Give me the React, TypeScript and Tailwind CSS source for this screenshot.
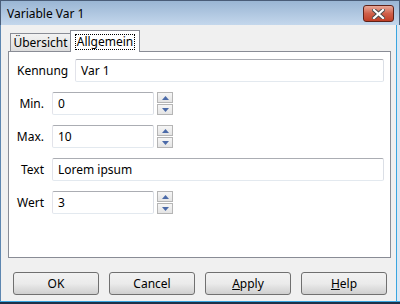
import React from "react";

const font = { fontFamily: '"Segoe UI", "Noto Sans", "Open Sans", sans-serif' };

function Spinner() {
  const btn =
    "w-[16px] h-[11px] border border-[#b5b5b5] bg-gradient-to-b from-[#f6f6f6] to-[#e4e4e4] flex items-center justify-center";
  return (
    <div className="flex flex-col gap-[1px] ml-[3px]">
      <div className={btn}>
        <svg width="7" height="4" viewBox="0 0 7 4">
          <path d="M3.5 0 L7 4 L0 4 Z" fill="#4b6aa8" />
        </svg>
      </div>
      <div className={btn}>
        <svg width="7" height="4" viewBox="0 0 7 4">
          <path d="M0 0 L7 0 L3.5 4 Z" fill="#4b6aa8" />
        </svg>
      </div>
    </div>
  );
}

function Input({ w, value }: { w: string; value: string }) {
  return (
    <div
      className={`${w} h-[23px] bg-white border border-t-[#abadb3] border-l-[#e2e3ea] border-r-[#dbdfe6] border-b-[#e3e9ef] rounded-[2px] flex items-center pl-[5px] text-[12px] text-black`}
    >
      {value}
    </div>
  );
}

function Btn({ children }: { children: React.ReactNode }) {
  return (
    <div className="w-[86px] h-[23px] rounded-[3px] border border-[#707070] bg-gradient-to-b from-[#f2f2f2] via-[#ebebeb] to-[#cfcfcf] flex items-center justify-center text-[12px] text-black">
      {children}
    </div>
  );
}

export default function App() {
  return (
    <div className="w-[400px] h-[304px] overflow-hidden bg-[#f0f0f0] flex flex-col" style={font}>
      {/* Title bar */}
      <div className="h-[25px] shrink-0 border-t border-l border-r border-[#4a5d78] bg-gradient-to-b from-[#9ab6d4] to-[#c4d7ec] flex items-center pl-[6px] pr-[5px]">
        <span className="text-[12px] text-black mt-[2px]">Variable Var 1</span>
        <div className="ml-auto mt-[1px] w-[31px] h-[17px] rounded-[3px] border border-[#5e2219] bg-gradient-to-b from-[#e8a898] via-[#d0604a] to-[#c03e25] flex items-center justify-center">
          <svg width="13" height="10" viewBox="0 0 13 10">
            <path d="M2 1 L11 9 M11 1 L2 9" stroke="#4a4a4a" strokeWidth="4" strokeLinecap="square" />
            <path d="M2 1 L11 9 M11 1 L2 9" stroke="#ffffff" strokeWidth="2.2" strokeLinecap="square" />
          </svg>
        </div>
      </div>

      {/* Body with frame */}
      <div className="flex-1 flex border-r-[3px] border-r-[#dce8f4]">
        <div className="flex-1 flex flex-col border-l border-l-[#5d86b0] border-r border-r-[#39a5e0]">
          {/* tab strip */}
          <div className="h-[26px] shrink-0 flex items-end pl-[7px] pt-[5px]">
            <div className="ml-[2px] w-[61px] h-[19px] border border-b-0 border-[#898c95] bg-gradient-to-b from-[#f3f3f3] to-[#dcdcdc] flex items-center justify-center text-[12px] text-black mb-[-1px]">
              Übersicht
            </div>
            <div className="relative z-10 w-[70px] h-[22px] border border-b-0 border-[#898c95] bg-white flex items-center justify-center text-[12px] text-black mb-[-1px] -ml-[1px]">
              <span className="border border-dotted border-black px-[1px] leading-[14px]">Allgemein</span>
            </div>
          </div>
          {/* panel */}
          <div className="ml-[7px] w-[383px] h-[207px] border border-[#898c95] bg-white flex flex-col gap-[10px] pt-[7px]">
            <div className="flex items-center">
              <div className="w-[66px] pl-[8px] text-[12px] text-black">Kennung</div>
              <Input w="w-[309px]" value="Var 1" />
            </div>
            <div className="flex items-center">
              <div className="w-[35px] text-right text-[12px] text-black">Min.</div>
              <div className="w-[8px]" />
              <Input w="w-[102px]" value="0" />
              <Spinner />
            </div>
            <div className="flex items-center">
              <div className="w-[35px] text-right text-[12px] text-black">Max.</div>
              <div className="w-[8px]" />
              <Input w="w-[102px]" value="10" />
              <Spinner />
            </div>
            <div className="flex items-center">
              <div className="w-[35px] text-right text-[12px] text-black">Text</div>
              <div className="w-[8px]" />
              <Input w="w-[332px]" value="Lorem ipsum" />
            </div>
            <div className="flex items-center">
              <div className="w-[35px] text-right text-[12px] text-black">Wert</div>
              <div className="w-[8px]" />
              <Input w="w-[102px]" value="3" />
              <Spinner />
            </div>
          </div>
          {/* buttons */}
          <div className="flex gap-[10px] pl-[12px] mt-[14px]">
            <Btn>OK</Btn>
            <Btn>Cancel</Btn>
            <Btn>
              <span>
                <span className="underline">A</span>pply
              </span>
            </Btn>
            <Btn>
              <span>
                <span className="underline">H</span>elp
              </span>
            </Btn>
          </div>
          <div className="flex-1" />
        </div>
      </div>
      <div className="h-[3px] shrink-0 border-t border-t-[#39a5e0] bg-[#1d3048]" />
    </div>
  );
}
